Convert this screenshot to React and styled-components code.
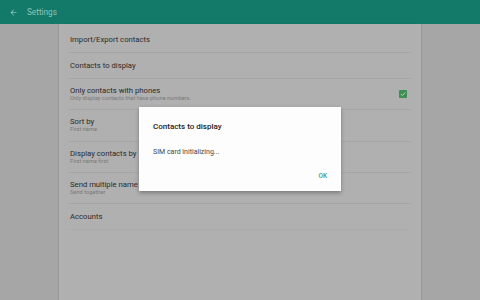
import React from 'react';
import styled, { createGlobalStyle } from 'styled-components';

const GlobalStyle = createGlobalStyle`
  html, body {
    margin: 0;
    padding: 0;
    width: 480px;
    height: 300px;
    overflow: hidden;
    font-family: Roboto, "Noto Sans", sans-serif;
  }
`;

const settings = [
  { title: 'Import/Export contacts' },
  { title: 'Contacts to display' },
  { title: 'Only contacts with phones', sub: 'Only display contacts that have phone numbers.', checked: true },
  { title: 'Sort by', sub: 'First name' },
  { title: 'Display contacts by', sub: 'First name first' },
  { title: 'Send multiple name cards', sub: 'Send together' },
  { title: 'Accounts' },
];

const App = () => {
  return (
    <Screen>
      <GlobalStyle />
      <AppBar>
        <BackIcon viewBox="0 0 24 24">
          <path d="M20 11H7.83l5.59-5.59L12 4l-8 8 8 8 1.41-1.41L7.83 13H20v-2z" fill="currentColor" />
        </BackIcon>
        <BarTitle>Settings</BarTitle>
      </AppBar>
      <Body>
        <Card>
          {settings.map((item, i) => (
            <Row key={i} tall={!!item.sub} last={i === settings.length - 1}>
              <RowText>
                <RowTitle>{item.title}</RowTitle>
                {item.sub && <RowSub>{item.sub}</RowSub>}
              </RowText>
              {item.checked && (
                <Checkbox>
                  <svg viewBox="0 0 10 10" width="6" height="6">
                    <path d="M1.5 5.2 L4 7.5 L8.5 2.5" fill="none" stroke="#b8d8c0" strokeWidth="1.6" />
                  </svg>
                </Checkbox>
              )}
            </Row>
          ))}
        </Card>
      </Body>
      <Dialog>
        <DialogTitle>Contacts to display</DialogTitle>
        <DialogBody>SIM card initializing...</DialogBody>
        <DialogActions>
          <OkButton>OK</OkButton>
        </DialogActions>
      </Dialog>
    </Screen>
  );
};

const Screen = styled.div`
  position: relative;
  width: 480px;
  height: 300px;
  background: #a6a6a6;
  display: flex;
  flex-direction: column;
`;

const AppBar = styled.div`
  height: 24px;
  background: #137a69;
  display: flex;
  align-items: center;
  padding-left: 9px;
  color: #8ec4b9;
  flex-shrink: 0;
`;

const BackIcon = styled.svg`
  width: 9px;
  height: 9px;
  margin-right: 9px;
`;

const BarTitle = styled.span`
  font-size: 8.2px;
`;

const Body = styled.div`
  flex: 1;
  display: flex;
  justify-content: center;
`;

const Card = styled.div`
  width: 362px;
  background: #b0b0b0;
  box-shadow: -1px 0 1px rgba(0, 0, 0, 0.08), 1px 0 1px rgba(0, 0, 0, 0.08);
  padding: 3px 10px 0 9px;
  box-sizing: border-box;
`;

const Row = styled.div`
  box-sizing: border-box;
  height: ${({ tall }) => (tall ? '31.3px' : '26px')};
  display: flex;
  align-items: center;
  justify-content: space-between;
  border-bottom: 1px solid ${({ last }) => (last ? '#acacac' : '#a6a6a6')};
  padding: 0 4px 0 2px;
`;

const RowText = styled.div`
  display: flex;
  flex-direction: column;
`;

const RowTitle = styled.div`
  font-size: 7.7px;
  color: #2a2a2a;
  line-height: 9px;
`;

const RowSub = styled.div`
  font-size: 5.7px;
  color: #7a7a7a;
  line-height: 7px;
`;

const Checkbox = styled.div`
  width: 8px;
  height: 8px;
  border-radius: 1px;
  background: #3f8f54;
  display: flex;
  align-items: center;
  justify-content: center;
`;

const Dialog = styled.div`
  position: absolute;
  left: 139px;
  top: 107px;
  width: 202px;
  height: 84px;
  background: #fdfdfd;
  box-shadow: 0 2px 4px rgba(0, 0, 0, 0.3);
  box-sizing: border-box;
  padding: 15px 14px 0 14px;
  display: flex;
  flex-direction: column;
`;

const DialogTitle = styled.div`
  font-size: 8px;
  font-weight: 500;
  color: #222;
`;

const DialogBody = styled.div`
  font-size: 7px;
  color: #444;
  margin-top: 17px;
`;

const DialogActions = styled.div`
  display: flex;
  justify-content: flex-end;
  margin-top: 16px;
`;

const OkButton = styled.span`
  font-size: 6.5px;
  font-weight: 500;
  color: #3f9b8d;
`;

export default App;
